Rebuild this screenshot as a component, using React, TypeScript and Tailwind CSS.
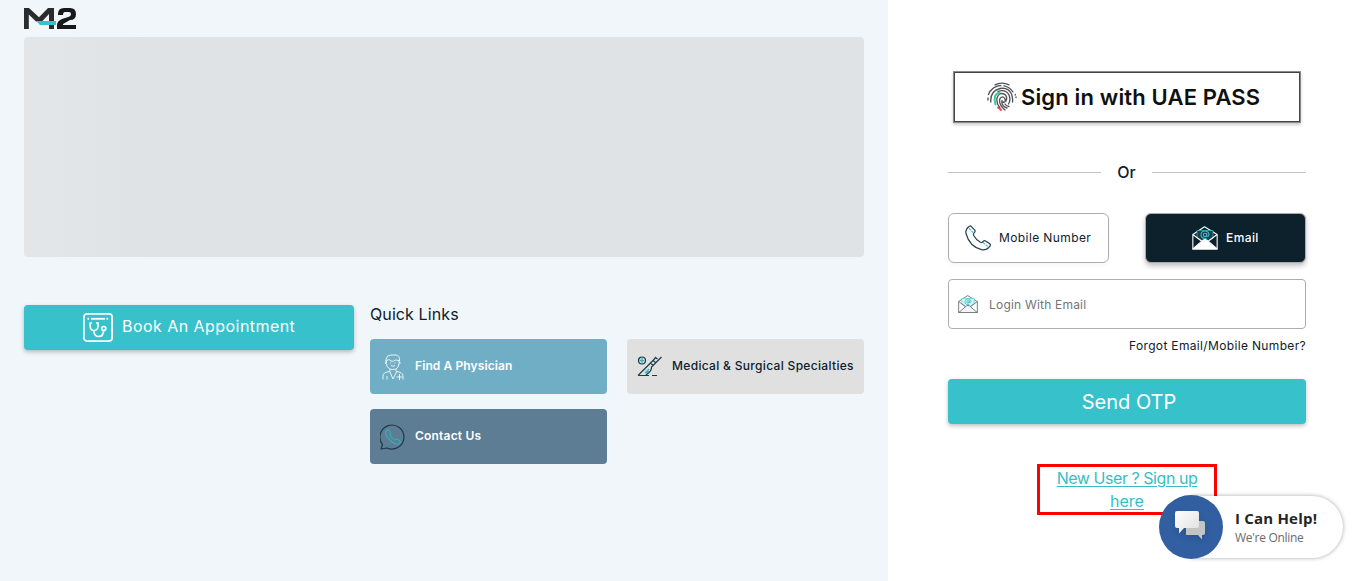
import React from "react";

function Logo() {
  return (
    <svg width="53" height="22" viewBox="0 0 53 22" className="block">
      <path d="M0 21V0H5L15 9.300L24 0H30V21H25V6L18 13.500H12L4.800 6.500V21Z" fill="#292b2d" />
      <path d="M12.300 13H32V17H16Z" fill="#36c1cb" />
      <path d="M34 7V6Q34 0 40 0H46Q52 0 52 6T46 12L39 16V17H52V21H33V17Q33 13 38 11L45 8.700Q47 8 47 6T45 4H41Q39 4 39 7Z" fill="#17191b" />
    </svg>
  );
}

function Fingerprint() {
  return (
    <svg width="30" height="30" viewBox="0 0 30 30" fill="none" stroke="#505254" strokeWidth="1.350" strokeLinecap="round">
      <path d="M8 2.800Q15-.5 22 2.800M4 8.500Q8 3.800 14 3.700M17 3.800Q23 5 26 10M1.500 12.500Q2.200 10.500 3.300 9M28.300 12.500V13M29 15V15.500M1 16V18M3.800 20Q3 9 13 6.500Q21 5 24.500 12Q26 16 25.500 20M11 9.300Q19 7 22 13Q24 18 21.500 22M13 26Q9 21 10 16Q12 10 17 12Q21 14 19 19M18 28Q11 22 13 16.500Q16 13 18 17Q19 21 16 20M20 26Q14 24 15 18.500M22 24.500Q19 24 18 22" />
      <path d="M8.500 22.500Q5.500 12.500 12.500 10.500" stroke="#35c89e" strokeWidth="1.900" />
      <path d="M11 25.500L11.500 26M13 27L14 28" stroke="#ef4444" strokeWidth="1.800" />
    </svg>
  );
}

function PhoneIcon() {
  return (
    <svg width="26" height="26" viewBox="0 0 26 26" fill="none" stroke="#26404f" strokeWidth="1.200" strokeLinejoin="round">
      <path d="M4.500 1.200Q5.500.5 6.400 1.600L9.800 5.200Q10.600 6.400 9.500 7.400Q8 8.800 8.700 10.500Q11 15 15.500 17.300Q17 18 18.100 16.400Q19.300 15.200 20.500 16L24.800 18.800Q25.900 19.800 25 21.200Q21.500 25.800 16.500 24.700Q4.500 21.500 1 8.500Q.2 4 4.500 1.200Z" />
      <path d="M4 3.500L8.200 7.500M18 17.500L22.800 21.500" stroke="#36c1cb" strokeDasharray="2.500 1" />
    </svg>
  );
}

function MailIcon({ dark = false, size }: { dark?: boolean; size: number }) {
  const line = dark ? "#ffffff" : "#62686d";
  return (
    <svg width={size} height={size * 0.92} viewBox="0 0 26 24" fill="none" stroke={line} strokeWidth="1.100" strokeLinejoin="round">
      <path d="M.8 8.500L12.500.8L25.200 8.500V23H.8Z" />
      <path d="M5 12V4.500H21V12L13 16.500Z" fill={dark ? "#183c48" : "#ddf4f5"} stroke="#36c1cb" strokeWidth=".7" />
      <path d="M.8 8.500L9.500 15M25.200 8.500L16.500 15" />
      <path d="M.8 23L11 14.200Q13 13 15 14.200L25.200 23Z" fill={dark ? "#ffffff" : "#f5f5f5"} />
      <circle cx="13" cy="9" r="1.700" stroke="#36c1cb" />
      <path d="M14.700 7.200V10Q17 11 17 8.500Q16.500 5 13 5Q9 5 9 9T14.500 12.400" stroke="#36c1cb" />
    </svg>
  );
}

function CalendarIcon() {
  return (
    <svg width="30" height="29" viewBox="0 0 30 29" fill="none" stroke="white" strokeWidth="1.700">
      <rect x=".9" y=".9" width="28.200" height="27.200" rx="3" />
      <path d="M8 5.800H22" strokeWidth="1.800" />
      <path d="M4.500 5.800H6.500M23.500 5.800H25.500" strokeWidth="2" strokeDasharray="1.400 .5" />
      <path d="M9 10H7.200V13.500Q7.500 17.500 11 17.500T15 13.500V10H13M11 17.500V19Q11.500 23.500 16 23.500Q20.500 23.500 20.500 17.500" />
      <circle cx="20.800" cy="15.500" r="2" />
    </svg>
  );
}

function DoctorIcon() {
  return (
    <svg width="22" height="26" viewBox="0 0 22 26" fill="none" stroke="#e4f2f6" strokeWidth="1">
      <path d="M4 10Q2.500 9 3.800 7.600L4 5Q5 1 9 1H14Q18 1 17.500 7.500Q19 9 17.300 10.300M4.500 9V6.500L7 5.500L9 7Q12 8 13 6L17 6.500M4.500 9.500Q5 15.500 10.800 15.500T17 9.500V6" />
      <path d="M8.500 8.500V9.500M13 8.500V9.500M9 11.500Q11 13 13 11.500M8 15V17.500Q1 18 1 22V25.500M14 15V17.500Q21 18 21 22V25.500M8 18L11 25L14.500 18M5 22V25.500M17.500 20V26M14.500 23H20.500" />
    </svg>
  );
}

function SurgeryIcon() {
  return (
    <svg width="26" height="21" viewBox="0 0 26 21" fill="none" stroke="#1d3a49" strokeWidth="1.200">
      <circle cx="5" cy="4.500" r="3.500" fill="#b8dde1" />
      <path d="M5 2.300V6.700M2.800 4.500H7.200" stroke="#35aeb9" />
      <path d="M1 19.500L16.500 4M18.500 1.500L20.500 3M1 19.500H12M15 19.500H20M13.500 7L16 9.500M16 4.500L18.500 6.500M24.500 1L14.500 11Q15 15 9 19M16.500 4L19 1" />
      <path d="M12 13L8 17M12 15L9 17.500" stroke="#35bbc5" />
    </svg>
  );
}

function ContactIcon() {
  return (
    <svg width="26" height="26" viewBox="0 0 26 26" fill="none" stroke="#203945" strokeWidth="1.200">
      <path d="M2.500 20.500A12 12 0 1 1 7 24L1 25Z" strokeLinejoin="round" />
      <path d="M7 6.500Q8 5.500 9 6.500L10.500 9Q11 10 9.800 11Q11.500 14.500 15 16Q16 14.500 17.500 15.300L20 17Q21 18 19.500 19.500Q16 21.500 10.500 16.500Q3 9 7 6.500Z" stroke="#37adb9" />
    </svg>
  );
}

function ChatIcon() {
  return (
    <svg width="32" height="30" viewBox="0 0 32 30" className="-ml-0.5 -mt-1 drop-shadow-md">
      <defs>
        <linearGradient id="front" x2="1" y2="1">
          <stop stopColor="#fff" />
          <stop offset="1" stopColor="#dedede" />
        </linearGradient>
      </defs>
      <path d="M13 11H29Q31 11 31 13V23Q31 25 29 25H28V29.500L24 25H12V12Z" fill="#c4c4c4" />
      <path d="M3 1H23Q25 1 25 3V16Q25 18 23 18H10L5 23.500V18H3Q1 18 1 16V3Q1 1 3 1Z" fill="url(#front)" />
    </svg>
  );
}

export default function App() {
  return (
    <main className="flex h-[581px] w-[1366px] overflow-hidden bg-white font-['Inter',sans-serif] text-[#0d212c]">
      <section className="w-[888px] shrink-0 bg-[#f1f6fa] px-6 pt-2">
        <Logo />
        <div className="mt-[7px] h-[220px] rounded bg-linear-to-r from-[#e2e6e9] to-[#dfe3e6] to-15%" />
        <div className="mt-12 flex gap-4">
          <button className="flex h-[45px] w-[330px] shrink-0 items-center rounded bg-[#36c1cb] pl-[59px] text-white shadow-[0_2px_4px_rgba(0,0,0,.25)]">
            <CalendarIcon />
            <span className="ml-[9px] -mt-1 whitespace-nowrap text-[16px] tracking-[0.45px]">Book An Appointment</span>
          </button>
          <div className="w-[494px]">
            <h2 className="h-[34px] whitespace-nowrap text-[16px] leading-[19px] tracking-[0.1px]">Quick Links</h2>
            <div className="grid grid-cols-[237px_237px] gap-x-5 gap-y-[15px] text-[12px]">
              <a className="flex h-[55px] items-center rounded bg-[#70aec6] pl-3 font-semibold text-white">
                <DoctorIcon />
                <span className="-mt-0.5 ml-[11px] whitespace-nowrap tracking-[0.1px]">Find A Physician</span>
              </a>
              <a className="flex h-[55px] items-center rounded bg-[#e0e0e0] pl-[10px] font-medium">
                <SurgeryIcon />
                <span className="-mt-0.5 ml-[9px] whitespace-nowrap tracking-[0.32px]">Medical &amp; Surgical Specialties</span>
              </a>
              <a className="flex h-[55px] items-center rounded bg-[#5c7d93] pl-[10px] font-semibold text-white">
                <ContactIcon />
                <span className="-mt-0.5 ml-[9px] whitespace-nowrap tracking-[0.2px]">Contact Us</span>
              </a>
            </div>
          </div>
        </div>
      </section>

      <section className="relative w-[478px] px-[60px] pt-[71px]">
        <button className="ml-[5px] flex h-[52px] w-[348px] items-center border border-[#8b898d] pl-[33px] text-[#101010] shadow-[inset_0_0_0_1px_#454348,0_2px_3px_rgba(0,0,0,.2)]">
          <Fingerprint />
          <span className="ml-[4px] whitespace-nowrap text-[22px] font-semibold tracking-[0.15px]">Sign in with UAE PASS</span>
        </button>
        <div className="mt-[37px] flex h-6 items-center justify-between text-[16px] font-medium">
          <span className="h-px w-[153px] bg-[#c4c4c4]" />
          <span>Or</span>
          <span className="h-px w-[154px] bg-[#c4c4c4]" />
        </div>
        <div className="mt-[29px] flex justify-between text-[12px]">
          <button className="flex h-[50px] w-[161px] items-center rounded-md border border-[#adadad] pl-4 shadow-[0_2px_4px_rgba(0,0,0,.04)]">
            <PhoneIcon />
            <span className="ml-2 whitespace-nowrap tracking-[0.4px]">Mobile Number</span>
          </button>
          <button className="flex h-[50px] w-[161px] items-center rounded-md border border-[#adadad] bg-[#0d212c] pl-[46px] font-medium text-white shadow-[0_3px_5px_rgba(0,0,0,.25)]">
            <MailIcon dark size={26} />
            <span className="ml-2 tracking-[0.4px]">Email</span>
          </button>
        </div>
        <div className="mt-4 flex h-[50px] items-center rounded border border-[#adadad] pl-[9px] text-[12px] text-[#757575]">
          <MailIcon size={20} />
          <span className="ml-[11px] mt-0.5 whitespace-nowrap tracking-[0.2px]">Login With Email</span>
        </div>
        <div className="mt-[7px] flex h-5 items-center justify-end whitespace-nowrap text-[12px]">
          <a className="tracking-[0.34px]">Forgot Email/Mobile Number?</a>
        </div>
        <button className="mt-[23px] flex h-[45px] w-full items-center justify-center rounded bg-[#36c1cb] pl-1 text-[20px] text-white shadow-[0_2px_4px_rgba(0,0,0,.25)]">
          <span>Send OTP</span>
        </button>
        <div className="mx-auto mt-10 h-[51px] w-[180px] border-3 border-[#ff0000] text-center text-[16px] leading-[23px] text-[#36bec8] underline underline-offset-2">
          <span className="tracking-[-0.45px]">New User ? Sign up</span>
          <br />
          <span>here</span>
        </div>
        <div className="absolute left-[271px] top-[495px] flex h-16 w-[185px] items-center font-['Open_Sans',sans-serif]">
          <div className="z-10 flex size-16 shrink-0 items-center justify-center rounded-full bg-[#315fa2]">
            <ChatIcon />
          </div>
          <div className="-ml-8 flex h-[62px] w-[152px] flex-col justify-center whitespace-nowrap rounded-r-full bg-white pl-11 pt-0.5 shadow-[0_0_4px_rgba(0,0,0,.35)]">
            <div className="text-[15px] font-bold leading-5 tracking-[0.2px] text-[#252525]">I Can Help!</div>
            <div className="text-[12px] leading-5 tracking-[-0.3px] text-[#6b6b6b]">We're Online</div>
          </div>
        </div>
      </section>
    </main>
  );
}
